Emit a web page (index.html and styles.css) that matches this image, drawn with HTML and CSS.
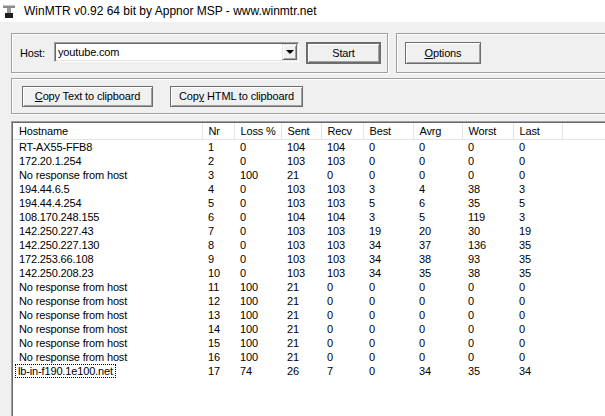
FILE: index.html
```html
<!DOCTYPE html>
<html>
    <head>
        <title>WinMTR</title>
        <link rel="stylesheet" href="styles.css">
    </head>
    <body>
        <div class="titlebar">
            <svg class="appicon" width="12" height="13" viewBox="0 0 12 13">
                <rect x="0" y="0" width="12" height="3" fill="#8a8a8a"/>
                <rect x="0" y="0" width="12" height="1" fill="#c8c8c8"/>
                <rect x="4" y="3" width="4" height="6" fill="#9a9a9a"/>
                <rect x="2" y="8" width="8" height="5" fill="#1e1e1e"/>
            </svg>
            <span>WinMTR v0.92 64 bit by Appnor MSP - www.winmtr.net</span>
        </div>

        <div class="client">
            <div class="toprow">
                <div class="group hostgroup">
                    <span class="label">Host:</span>
                    <div class="combo">
                        <span class="combo_text">youtube.com</span>
                        <span class="combo_btn"><span class="arrow"></span></span>
                    </div>
                    <div class="button default"><span>Start</span></div>
                </div>
                <div class="group optgroup">
                    <div class="button"><span><u>O</u>ptions</span></div>
                </div>
            </div>

            <div class="group copygroup">
                <div class="button wide"><span><u>C</u>opy Text to clipboard</span></div>
                <div class="button wide"><span>Cop<u>y</u> HTML to clipboard</span></div>
            </div>

            <div class="listview">
                <table>
                    <colgroup>
                        <col style="width:189px"><col style="width:32px"><col style="width:47px">
                        <col style="width:40px"><col style="width:42px"><col style="width:50px">
                        <col style="width:49px"><col style="width:51px"><col style="width:49px"><col>
                    </colgroup>
                    <thead>
                        <tr>
                            <th>Hostname</th><th>Nr</th><th>Loss %</th><th>Sent</th><th>Recv</th>
                            <th>Best</th><th>Avrg</th><th>Worst</th><th>Last</th><th></th>
                        </tr>
                    </thead>
                    <tbody id="rows"></tbody>
                </table>
            </div>
        </div>

        <script>
            var hops = [
                ["RT-AX55-FFB8", 1, 0, 104, 104, 0, 0, 0, 0],
                ["172.20.1.254", 2, 0, 103, 103, 0, 0, 0, 0],
                ["No response from host", 3, 100, 21, 0, 0, 0, 0, 0],
                ["194.44.6.5", 4, 0, 103, 103, 3, 4, 38, 3],
                ["194.44.4.254", 5, 0, 103, 103, 5, 6, 35, 5],
                ["108.170.248.155", 6, 0, 104, 104, 3, 5, 119, 3],
                ["142.250.227.43", 7, 0, 103, 103, 19, 20, 30, 19],
                ["142.250.227.130", 8, 0, 103, 103, 34, 37, 136, 35],
                ["172.253.66.108", 9, 0, 103, 103, 34, 38, 93, 35],
                ["142.250.208.23", 10, 0, 103, 103, 34, 35, 38, 35],
                ["No response from host", 11, 100, 21, 0, 0, 0, 0, 0],
                ["No response from host", 12, 100, 21, 0, 0, 0, 0, 0],
                ["No response from host", 13, 100, 21, 0, 0, 0, 0, 0],
                ["No response from host", 14, 100, 21, 0, 0, 0, 0, 0],
                ["No response from host", 15, 100, 21, 0, 0, 0, 0, 0],
                ["No response from host", 16, 100, 21, 0, 0, 0, 0, 0],
                ["lb-in-f190.1e100.net", 17, 74, 26, 7, 0, 34, 35, 34]
            ];

            var tbody = document.getElementById("rows");
            var html = "";
            for (var i = 0; i < hops.length; i++) {
                var h = hops[i];
                var last = (i == hops.length - 1);
                html += "<tr>";
                html += "<td>" + (last ? "<span class=\"focus\">" + h[0] + "</span>" : h[0]) + "</td>";
                for (var j = 1; j < h.length; j++) {
                    html += "<td>" + h[j] + "</td>";
                }
                html += "<td></td></tr>";
            }
            tbody.innerHTML = html;
        </script>
    </body>
</html>
```

FILE: styles.css
```css
body {
    margin: 0px;
    background: #f0f0f0;
    width: 605px;
    height: 416px;
    overflow: hidden;
}
.titlebar {
    height: 22px;
    background: white;
    display: flex;
    align-items: center;
    padding-left: 3px;
    font-family: "Liberation Sans", sans-serif;
    font-size: 12px;
    color: black;
}
.appicon {
    margin-right: 9px;
    margin-top: 1px;
}
.client {
    padding-left: 11px;
    font-family: "Liberation Sans", sans-serif;
    font-size: 11px;
    letter-spacing: -0.15px;
    color: black;
}
.toprow {
    display: flex;
    margin-top: 11px;
    gap: 8px;
}
.group {
    border: 1px solid #a0a0a0;
    box-shadow: inset 1px 1px 0 #fff, 1px 1px 0 #fff;
    display: flex;
    align-items: center;
    box-sizing: border-box;
}
.hostgroup {
    width: 377px;
    height: 40px;
    padding-left: 8px;
}
.optgroup {
    flex: 1;
    height: 40px;
    padding-left: 8px;
    margin-right: -10px;
}
.label {
    width: 34px;
}
.combo {
    width: 245px;
    height: 20px;
    box-sizing: border-box;
    background: white;
    border-top: 1px solid #a0a0a0;
    border-left: 1px solid #a0a0a0;
    border-right: 1px solid #fff;
    border-bottom: 1px solid #fff;
    box-shadow: inset 1px 1px 0 #696969, inset -1px -1px 0 #e3e3e3;
    display: flex;
    align-items: center;
    padding-left: 3px;
    margin-top: -2px;
}
.combo_text {
    flex: 1;
}
.combo_btn {
    width: 15px;
    height: 16px;
    margin-right: 1px;
    box-sizing: border-box;
    background: #f0f0f0;
    border-top: 1px solid #e3e3e3;
    border-left: 1px solid #e3e3e3;
    border-right: 1px solid #696969;
    border-bottom: 1px solid #696969;
    box-shadow: inset 1px 1px 0 #fff, inset -1px -1px 0 #a0a0a0;
    display: flex;
    align-items: center;
    justify-content: center;
}
.arrow {
    width: 0px;
    height: 0px;
    border-left: 4px solid transparent;
    border-right: 4px solid transparent;
    border-top: 4px solid black;
}
.button {
    height: 22px;
    box-sizing: border-box;
    background: #f0f0f0;
    border: 1px solid #6d6d6d;
    box-shadow: inset 1px 1px 0 #fff, inset -1px -1px 0 #a0a0a0;
    display: flex;
    align-items: center;
    justify-content: center;
    width: 76px;
}
.default {
    border: 2px solid #6d6d6d;
    margin-left: 7px;
    width: 75px;
}
.copygroup {
    margin-top: 5px;
    height: 36px;
    margin-right: -10px;
    padding-left: 10px;
    gap: 17px;
}
.wide {
    height: 21px;
}
.copygroup .button:first-child {
    width: 131px;
}
.copygroup .button:last-child {
    width: 133px;
}
.listview {
    margin-top: 7px;
    margin-right: -10px;
    height: 300px;
    background: white;
    border-top: 1px solid #a0a0a0;
    border-left: 1px solid #a0a0a0;
    box-shadow: inset 1px 1px 0 #696969;
    padding: 1px 0px 0px 1px;
}
table {
    border-collapse: collapse;
    table-layout: fixed;
    width: 604px;
}
th {
    font-weight: normal;
    text-align: left;
    height: 16px;
    padding: 0px 0px 0px 6px;
    border-right: 1px solid #e5e5e5;
    border-bottom: 1px solid #e5e5e5;
    white-space: nowrap;
    overflow: hidden;
}
td {
    height: 14px;
    padding: 0px 0px 0px 6px;
    line-height: 14px;
    white-space: nowrap;
    overflow: hidden;
}
.focus {
    outline: 1px dotted black;
    outline-offset: 0px;
    margin-left: -3px;
    padding: 0px 2px;
}
```
